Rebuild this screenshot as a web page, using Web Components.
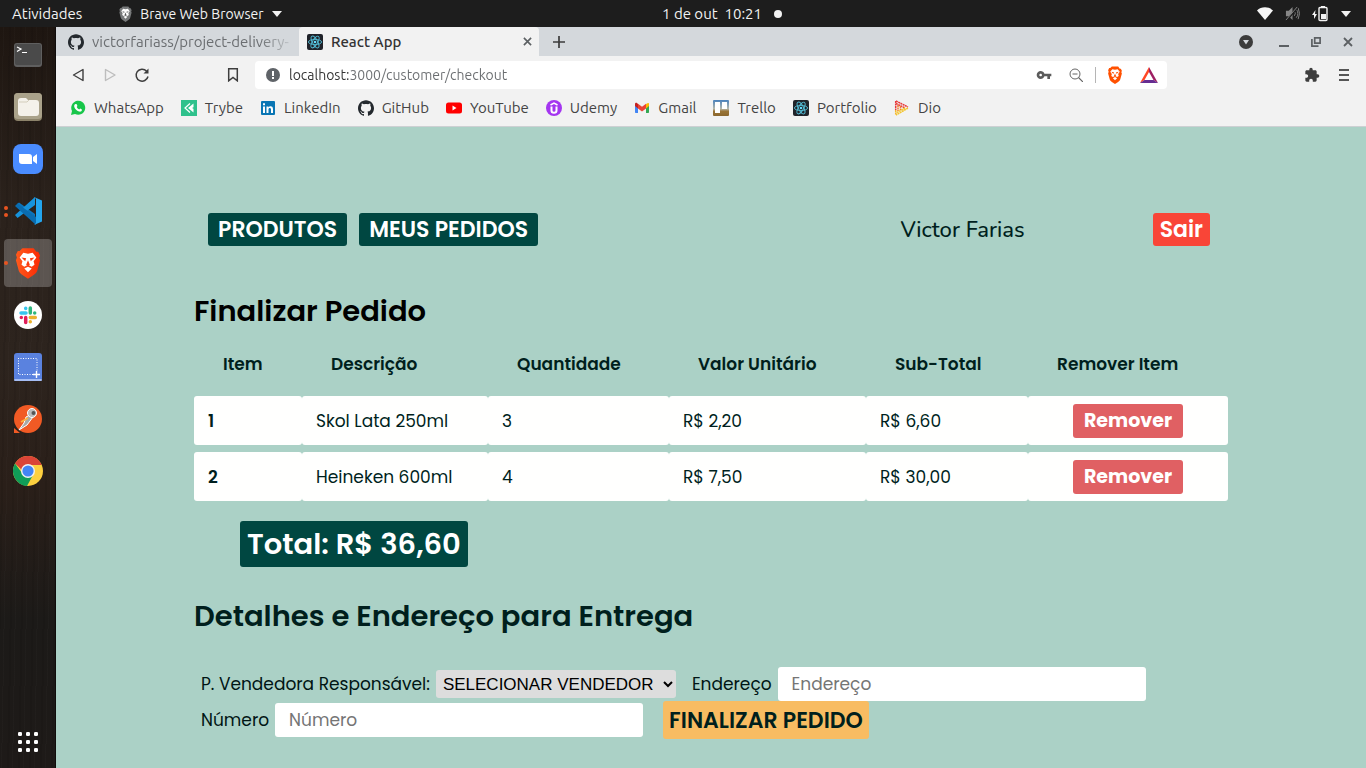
<!DOCTYPE html>
<html lang="pt-BR">
<head>
<meta charset="utf-8">
<meta name="viewport" content="width=device-width, initial-scale=1">
<title>React App</title>
<style>
  body { margin: 0; background: #1d1d1d; }
</style>
</head>
<body>
<desktop-shell></desktop-shell>
<script>
const GITHUB = '<path fill="#24292e" d="M12 .297c-6.63 0-12 5.373-12 12 0 5.303 3.438 9.8 8.205 11.385.6.113.82-.258.82-.577 0-.285-.01-1.04-.015-2.04-3.338.724-4.042-1.61-4.042-1.61C4.422 18.07 3.633 17.7 3.633 17.7c-1.087-.744.084-.729.084-.729 1.205.084 1.838 1.236 1.838 1.236 1.07 1.835 2.809 1.305 3.495.998.108-.776.417-1.305.76-1.605-2.665-.3-5.466-1.332-5.466-5.93 0-1.31.465-2.38 1.235-3.22-.135-.303-.54-1.523.105-3.176 0 0 1.005-.322 3.3 1.23.96-.267 1.98-.399 3-.405 1.02.006 2.04.138 3 .405 2.28-1.552 3.285-1.23 3.285-1.23.645 1.653.24 2.873.12 3.176.765.84 1.23 1.91 1.23 3.22 0 4.61-2.805 5.625-5.475 5.92.42.36.81 1.096.81 2.22 0 1.606-.015 2.896-.015 3.286 0 .315.21.69.825.57C20.565 22.092 24 17.592 24 12.297c0-6.627-5.373-12-12-12"/>';
const REACT = '<rect width="16" height="16" rx="2" fill="#20232a"/><g fill="none" stroke="#53bdd6" stroke-width=".9"><ellipse cx="8" cy="8" rx="6.6" ry="2.6"/><ellipse cx="8" cy="8" rx="6.6" ry="2.6" transform="rotate(60 8 8)"/><ellipse cx="8" cy="8" rx="6.6" ry="2.6" transform="rotate(120 8 8)"/></g><circle cx="8" cy="8" r="1.3" fill="#61dafb"/>';
const lion = (body, face, eyes) => `<path fill="${body}" d="M8 1h12l3 4h2l2 4-1 3 1 2-3 11c-.5 2-2 3.500-4 5l-6 4-6-4c-2-1.500-3.500-3-4-5L1 14l1-3-1-3 2-4h2z"/><path fill="${face}" d="M9 6l5 1 5-1 4 5-3 4 1 4-3 2-4-2-4 2-3-2 1-4-3-4zM10 23l4-2 4 2-4 4z"/><path fill="${eyes}" d="M7 11l5 1-1 3zM21 11l-5 1 1 3zM12 19l2-5 2 5-2 1z"/>`;

const ICONS = {
  github: ['0 0 24 24', GITHUB],
  react: ['0 0 16 16', REACT],
  brave: ['0 0 28 34', '<defs><linearGradient id="b" x2="1"><stop stop-color="#ff5a1c"/><stop offset="1" stop-color="#fb2a05"/></linearGradient></defs>' + lion('url(#b)', '#fff', '#fb3b0e')],
  shield: ['0 0 28 34', lion('#ff5000', '#fff', '#ff5000')],
  bravemono: ['0 0 28 34', lion('#77797a', '#fff', '#555')],
  caret: ['0 0 12 6', '<path fill="#f2f2f2" d="M1 0h10L6 6z"/>'],
  wifi: ['0 0 16 13', '<path fill="#f6f6f6" d="M8 13L0 3.500C4-.7 12-.7 16 3.500z"/>'],
  mute: ['0 0 16 16', '<path fill="#868686" d="M1 5h3l4-4v14l-4-4H1z"/><path fill="none" stroke="#868686" d="M10 5.500q2 2.500 0 5M12 3.500q3.500 4.500 0 9M14 2q3 6 0 12"/><path stroke="#1d1d1d" stroke-width="2" d="M2 15L14 1"/><path stroke="#868686" d="M1 15L13 1"/>'],
  battery: ['0 0 16 16', '<path fill="#f2f2f2" d="M3.500 4L0 9h2v4l3-5H3zM9 0h4v2H9zM9 8h5v5H9z"/><rect x="7" y="1.500" width="8" height="13" rx="1" fill="none" stroke="#f2f2f2" stroke-width="1.400"/>'],
  close: ['0 0 10 10', '<path stroke="currentColor" stroke-width="1.800" d="M1 1l8 8M9 1L1 9"/>'],
  plus: ['0 0 12 12', '<path stroke="#3b3b3b" stroke-width="1.700" d="M6 0v12M0 6h12"/>'],
  tabsearch: ['0 0 14 14', '<circle cx="7" cy="7" r="7" fill="#3c3c3c"/><path fill="#d4d8dc" d="M4 5h6L7 9.500z"/>'],
  minimize: ['0 0 10 10', '<path fill="#5c6063" d="M0 8h10v2H0z"/>'],
  restore: ['0 0 10 10', '<path fill="none" stroke="#5c6063" stroke-width="1.700" d="M3.700.900h5.400v5.200H3.700zM.900 2v7.100H7.500"/>'],
  back: ['0 0 14 14', '<path fill="none" stroke="#3e3e3e" stroke-width="1.400" stroke-linejoin="round" d="M12 1.500v11L2.500 7z"/>'],
  forward: ['0 0 14 14', '<path fill="none" stroke="#bdbdbd" stroke-width="1.400" stroke-linejoin="round" d="M2.500 1.500v11L12 7z"/>'],
  reload: ['0 0 16 16', '<path fill="none" stroke="#3e3e3e" stroke-width="1.500" d="M14 9.500A6 6 0 1 1 12.500 4"/><path fill="#3e3e3e" d="M14.500 1.500v5h-5z"/>'],
  bookmark: ['0 0 14 14', '<path fill="none" stroke="#3e3e3e" stroke-width="1.500" d="M2.700.800h8.600v12L7 9.500l-4.300 3.300z"/>'],
  info: ['0 0 14 14', '<circle cx="7" cy="7" r="7" fill="#5f6368"/><path fill="#fff" d="M6 3h2v5H6zM6 9h2v2H6z"/>'],
  key: ['0 0 24 24', '<path fill="#5b5b5b" d="M12.650 10C11.830 7.670 9.610 6 7 6c-3.310 0-6 2.690-6 6s2.690 6 6 6c2.610 0 4.830-1.670 5.650-4H17v4h4v-4h2v-4H12.650zM7 14c-1.100 0-2-.9-2-2s.9-2 2-2 2 .9 2 2-.9 2-2 2z"/>'],
  zoomout: ['0 0 14 14', '<circle cx="6" cy="6" r="5" fill="none" stroke="#666"/><path stroke="#666" d="M3.500 6h5M9.500 9.500L14 14" stroke-width="1.200"/>'],
  bat: ['0 0 18 16', '<path fill="#ff4724" d="M9 0v5L4.500 13 0 16z"/><path fill="#9e1f63" d="M9 0l9 16-4.500-3L9 5z"/><path fill="#662d91" d="M0 16l4.500-3h9L18 16z"/>'],
  puzzle: ['0 0 24 24', '<path fill="#3e3e3e" d="M20.500 11H19V7c0-1.100-.9-2-2-2h-4V3.500a2.500 2.500 0 0 0-5 0V5H4c-1.100 0-1.990.9-1.990 2v3.800H3.500c1.490 0 2.700 1.210 2.700 2.700s-1.210 2.700-2.700 2.700H2V20c0 1.100.9 2 2 2h3.800v-1.500c0-1.490 1.210-2.700 2.700-2.700s2.700 1.210 2.700 2.700V22H17c1.100 0 2-.9 2-2v-4h1.500a2.500 2.500 0 0 0 0-5z"/>'],
  menu: ['0 0 12 12', '<path fill="#555" d="M1 0h10v2H1zM1 5h10v2H1zM1 10h10v2H1z"/>'],
  whatsapp: ['0 0 16 16', '<path fill="#18c64a" d="M1 15l1-4A7 7 0 1 1 5 14z"/><path fill="#fff" d="M5.500 4l1.300.2.600 1.800-.7.900c.6 1.200 1.300 1.900 2.600 2.500l.9-.9 1.700.9c.2 1.800-1.300 2.400-2.500 2.200C6.500 10.800 4 8 4.200 6c0-.9.500-1.700 1.300-2z"/>'],
  trybe: ['0 0 16 16', '<path fill="#2fc18c" d="M0 0h16v16H0z"/><path fill="none" stroke="#fff" stroke-width="1.200" d="M9 3.500L4 8l5 4.500"/><path fill="#fff" d="M12.500 3.500v3.700l-1.500.8 1.500.8v3.700L7 8z"/>'],
  linkedin: ['0 0 16 16', '<rect x="1" y="1" width="14" height="14" rx="1" fill="#0a76b4"/><path fill="#fff" d="M3 6.500h2V13H3zM3 3.300h2v2H3zM6.500 6.500h2v1c1-1.700 4.500-1.700 4.500 1.500v4h-2V9.500c0-2-2.500-2-2.500 0V13h-2z"/>'],
  youtube: ['0 0 16 16', '<rect y="2.500" width="16" height="11" rx="2.500" fill="#f00"/><path fill="#fff" d="M6.500 5.500l4 2.500-4 2.500z"/>'],
  udemy: ['0 0 16 16', '<circle cx="8" cy="8" r="8" fill="#a435f0"/><path fill="none" stroke="#fff" stroke-width="2" d="M5.500 6.500v4c0 3 5 3 5 0v-4"/><path fill="none" stroke="#fff" stroke-width="1.500" d="M4.500 5L8 3l3.500 2"/>'],
  gmail: ['0 0 16 16', '<path fill="#4285f4" d="M1 4l3 2v7H2c-.6 0-1-.4-1-1z"/><path fill="#34a853" d="M15 4l-3 2v7h2c.6 0 1-.4 1-1z"/><path fill="#fbbc04" d="M12 4l2-1c.6 0 1 .4 1 1v2l-3 2.500z"/><path fill="#c5221f" d="M1 4c0-1 1-1.500 2-1l1 1v4.500L1 6z"/><path fill="#ea4335" d="M4 3.800l4 3 4-3v4.700l-4 3-4-3z"/>'],
  trello: ['0 0 16 16', '<defs><linearGradient id="t" x2="0" y2="1"><stop stop-color="#4a82bd"/><stop offset=".55" stop-color="#b6b9ad"/><stop offset=".7" stop-color="#9a7537"/><stop offset="1" stop-color="#8b672e"/></linearGradient></defs><rect width="16" height="16" rx="1" fill="url(#t)"/><path fill="#fff" d="M2 2h5v11H2zM9 2h5v7H9z"/>'],
  dio: ['0 0 16 16', '<g fill="none" stroke-width="1.500" stroke-dasharray="2 .5"><path stroke="#e83b3d" d="M2 1l12 6M2 3.500l9 4.500"/><path stroke="#e83b3d" d="M1.700 1v9"/><path stroke="#f27a2d" d="M4 5v6M6.500 6v4"/><path stroke="#f3c530" d="M14 8L2 15M11 8l-9 5"/><path stroke="#f5b92c" d="M1.700 10v5"/></g>'],
  terminal: ['0 0 28 24', '<rect width="28" height="24" rx="3" fill="#5f5f5f"/><rect x="1" y="1" width="26" height="21" rx="2" fill="#4a4a4a"/><path fill="none" stroke="#fff" stroke-width="1.200" d="M3 4l4 2-4 2.500M8 9.500h5"/>'],
  files: ['0 0 30 30', '<rect x="1" y="1" width="28" height="28" rx="4" fill="#8c836a"/><rect x="1" y="1" width="28" height="26" rx="4" fill="#aaa28a"/><path fill="#f4f1ea" d="M5 9q0-3 3-3h5l2 2h8q3 0 3 3v10q0 3-3 3H8q-3 0-3-3z"/><path stroke="#d3cdbb" d="M6 10h8l2-2" fill="none"/>'],
  zoomapp: ['0 0 30 30', '<rect width="30" height="30" rx="8" fill="#4a8cff"/><path fill="#fff" d="M6 10h10q3 0 3 3v7H9q-3 0-3-3zM20 13l4-3v10l-4-3z"/>'],
  vscode: ['0 0 28 28', '<path fill="#0b75bd" d="M3 7l18 17v-7L5 5.500z" /><path fill="#1793dc" d="M1 18l2.500 3L21 8V0z"/><path fill="#0a6cb0" d="M1 9l2.500-2.500L22 20v8z"/><path fill="#23a5ee" d="M20 0l8 3.500v21L20 28l2-2V2z"/>'],
  slack: ['0 0 28 28', '<circle cx="14" cy="14" r="14" fill="#fff"/><g stroke-width="3.500" stroke-linecap="round"><path stroke="#36c5f0" d="M7 12h5M11.700 7.300v.1"/><path stroke="#2eb67d" d="M16.300 7v5M20.700 12v0"/><path stroke="#ecb22e" d="M16.300 16.500h5M16.300 20.800v0"/><path stroke="#e01e5a" d="M11.700 16.500v5M7.300 16.500v0"/></g>'],
  screenshot: ['0 0 28 28', '<rect width="28" height="28" rx="3" fill="#5a82df"/><rect y="26" width="28" height="2" rx="1" fill="#a5bdf4"/><path fill="none" stroke="#fff" stroke-dasharray="1 1.500" d="M4 5.500h19v13M4.500 5v16.500h15"/><path stroke="#fff" stroke-width="1.400" d="M22.500 18v7M19 21.500h7"/>'],
  postman: ['0 0 30 30', '<circle cx="15" cy="15" r="14" fill="#f15a24"/><path fill="#f15a24" d="M1 24l6 5H1z"/><path fill="#a5a9a8" stroke="#fff" d="M17 11l3 2-6 8-8 5 5-7 2-6z"/><circle cx="19" cy="9" r="4.500" fill="#bbb" stroke="#fff"/><circle cx="20.500" cy="9" r="2" fill="#555"/><path stroke="#ffb13c" stroke-width="2" d="M8 18l7-4"/>'],
  chrome: ['0 0 30 30', '<circle cx="15" cy="15" r="15" fill="#fdd03f"/><path fill="#da4437" d="M2 7.500A15 15 0 0 1 28 7.500L28.500 9H15a6 6 0 0 0-6 5z"/><path fill="#109d58" d="M2 7.500A15 15 0 0 0 14 30l6-11-5 2a7 7 0 0 1-6-4z"/><circle cx="15" cy="15" r="7" fill="#f1f1f1"/><circle cx="15" cy="15" r="5.600" fill="#4285f4"/>'],
  apps: ['0 0 20 20', [0, 8, 16].map(y => [0, 8, 16].map(x => `<rect x="${x}" y="${y}" width="4" height="4" rx="1.300" fill="#fff"/>`).join('')).join('')]
};

/* Shared base: fills the open shadow root from styles() and markup(). */
class UiElement extends HTMLElement {
  constructor() {
    super();
    this.attachShadow({ mode: 'open' });
  }
  connectedCallback() {
    const t = document.createElement('template');
    t.innerHTML = `<style>*{box-sizing:border-box}${this.styles()}</style>${this.markup()}`;
    this.shadowRoot.replaceChildren(t.content.cloneNode(true));
  }
  styles() { return ''; }
  markup() { return '<slot></slot>'; }
}

const define = (name, styles, markup) => customElements.define(name, class extends UiElement {
  styles() { return typeof styles === 'function' ? styles(this) : styles; }
  markup() { return typeof markup === 'function' ? markup(this) : markup; }
});

define('ui-icon',
  el => `:host{display:block;flex:none;width:${el.getAttribute('w')}px;height:${el.getAttribute('h') || el.getAttribute('w')}px}svg{display:block;width:100%;height:100%}`,
  el => { const [box, body] = ICONS[el.getAttribute('name')]; return `<svg viewBox="${box}" aria-hidden="true">${body}</svg>`; });

define('icon-button', `
  :host{display:block;flex:none}
  button{display:grid;place-items:center;width:32px;height:28px;padding:0;border:0;background:none;color:#5c6063}`,
  el => `<button type="button" aria-label="${el.getAttribute('label')}"><slot></slot></button>`);

define('top-bar', `
  :host{display:grid;grid-template-columns:1fr auto 1fr;align-items:center;height:27px;background:#1d1d1d;color:#f2f2f2;font-size:15px}
  .left,.mid,.right{display:flex;align-items:center}
  .left{padding-left:12px;gap:36px}
  .mid{padding-left:78px;gap:12px}
  .right{justify-content:flex-end;gap:12px;padding-right:14px}
  button{display:flex;align-items:center;gap:7px;padding:0;border:0;background:none;color:inherit;font:inherit;white-space:pre}
  .app{font-size:14px}
  .dot{width:8px;height:8px;border-radius:50%;background:#f2f2f2}`,
  `<div class="left"><button type="button">Atividades</button>
    <button type="button" class="app"><ui-icon name="bravemono" w="15" h="16"></ui-icon>Brave Web Browser<ui-icon name="caret" w="12" h="6"></ui-icon></button></div>
   <div class="mid"><button type="button">1 de out  10:21</button><span class="dot"></span></div>
   <div class="right"><ui-icon name="wifi" w="16" h="13"></ui-icon><ui-icon name="mute" w="15"></ui-icon><ui-icon name="battery" w="16"></ui-icon><ui-icon name="caret" w="12" h="6"></ui-icon></div>`);

define('dock-item', `
  :host{display:block}
  button{position:relative;display:grid;place-items:center;width:48px;height:48px;padding:0;border:0;border-radius:4px;background:none}
  :host([active]) button{background:#ffffff3b}
  .dots{position:absolute;left:0;display:grid;gap:3px}
  i{width:4px;height:4px;border-radius:50%;background:#e95420}`,
  el => `<button type="button" aria-label="${el.getAttribute('label')}"><span class="dots">${'<i></i>'.repeat(+el.getAttribute('windows') || 0)}</span><slot></slot></button>`);

define('app-dock', `
  :host{display:flex;flex-direction:column;gap:4px;padding:4px 4px 2px;border-right:1px solid #0f0c0b;
    background:repeating-linear-gradient(91deg,#0000 0 3px,#ffffff04 3px 4px,#0000 4px 9px,#00000014 9px 11px),
      linear-gradient(#1e1611 0,#2b221c 25%,#2d241e 45%,#2a1f19 62%,#1c1a18 80%,#1e1a18 100%)}
  .end{margin-top:auto}`, `
  <dock-item label="Terminal"><ui-icon name="terminal" w="28" h="24"></ui-icon></dock-item>
  <dock-item label="Arquivos"><ui-icon name="files" w="30"></ui-icon></dock-item>
  <dock-item label="Zoom"><ui-icon name="zoomapp" w="30"></ui-icon></dock-item>
  <dock-item label="Visual Studio Code" windows="2"><ui-icon name="vscode" w="28"></ui-icon></dock-item>
  <dock-item label="Brave" windows="1" active><ui-icon name="brave" w="26" h="32"></ui-icon></dock-item>
  <dock-item label="Slack"><ui-icon name="slack" w="28"></ui-icon></dock-item>
  <dock-item label="Captura de tela"><ui-icon name="screenshot" w="28"></ui-icon></dock-item>
  <dock-item label="Postman"><ui-icon name="postman" w="30"></ui-icon></dock-item>
  <dock-item label="Google Chrome"><ui-icon name="chrome" w="30"></ui-icon></dock-item>
  <dock-item class="end" label="Mostrar aplicativos"><ui-icon name="apps" w="20"></ui-icon></dock-item>`);

define('tab-strip', `
  :host{display:flex;align-items:stretch;height:29px;background:#d4d8dc;font-size:15px}
  .tab{display:flex;align-items:center;gap:8px;border:0;font:inherit;text-align:left;white-space:nowrap;background:none;color:#6b6e71}
  .first{flex:0 0 243px;padding:0 0 0 12px}
  .first span{-webkit-mask:linear-gradient(90deg,#000 85%,#0003);mask:linear-gradient(90deg,#000 85%,#0003)}
  .current{flex:0 0 240px;padding:0 0 0 8px;border-radius:4px 4px 0 0;background:#f2f2f2;color:#333}
  .current button{border:0;padding:0;background:none;font:inherit;font-weight:500;color:inherit;flex:1;text-align:left}
  .window{display:flex;margin-left:auto;padding-right:2px}
  .window > :first-child{margin-right:6px}
  .current icon-button{margin-right:-4px}
  .current+icon-button{margin-left:4px}
  icon-button{align-self:center}`, `
  <button type="button" class="tab first"><ui-icon name="github" w="16"></ui-icon><span>victorfariass/project-delivery-</span></button>
  <div class="tab current"><ui-icon name="react" w="16"></ui-icon><button type="button">React App</button><icon-button label="Fechar aba"><ui-icon name="close" w="9"></ui-icon></icon-button></div>
  <icon-button label="Nova aba"><ui-icon name="plus" w="12"></ui-icon></icon-button>
  <div class="window">
    <icon-button label="Pesquisar abas"><ui-icon name="tabsearch" w="14"></ui-icon></icon-button>
    <icon-button label="Minimizar"><ui-icon name="minimize" w="10"></ui-icon></icon-button>
    <icon-button label="Restaurar"><ui-icon name="restore" w="10"></ui-icon></icon-button>
    <icon-button label="Fechar"><ui-icon name="close" w="10"></ui-icon></icon-button>
  </div>`);

define('address-bar', `
  :host{display:flex;align-items:center;height:38px;padding:0 6px;background:#f2f2f2}
  .nav{display:flex;flex:0 0 193px}
  .nav > :last-child{margin-left:auto;margin-right:6px}
  .box{display:flex;align-items:center;flex:1;min-width:0;height:28px;padding:0 2px 0 11px;border-radius:4px;background:#fff}
  .box > :last-child{margin-left:2px}
  input{flex:1;min-width:0;padding:0;margin-left:9px;border:0;outline:0;font:inherit;font-size:14px;
    background:linear-gradient(90deg,#333 60px,#6a6d70 60px);-webkit-background-clip:text;background-clip:text;color:transparent}
  .rule{width:1px;height:16px;margin:0 3px;background:#b5b5b5}
  .ext{display:flex;justify-content:flex-end;flex:0 0 193px}`, `
  <div class="nav"><icon-button label="Voltar"><ui-icon name="back" w="14"></ui-icon></icon-button><icon-button label="Avançar"><ui-icon name="forward" w="14"></ui-icon></icon-button><icon-button label="Recarregar"><ui-icon name="reload" w="16"></ui-icon></icon-button><icon-button label="Adicionar favorito"><ui-icon name="bookmark" w="14"></ui-icon></icon-button></div>
  <div class="box"><ui-icon name="info" w="14"></ui-icon><input type="text" aria-label="Endereço" value="localhost:3000/customer/checkout"><icon-button label="Senhas"><ui-icon name="key" w="16"></ui-icon></icon-button><icon-button label="Zoom"><ui-icon name="zoomout" w="14"></ui-icon></icon-button><span class="rule"></span><icon-button label="Brave Shields"><ui-icon name="shield" w="16" h="18"></ui-icon></icon-button><icon-button label="Brave Rewards"><ui-icon name="bat" w="18" h="16"></ui-icon></icon-button></div>
  <div class="ext"><icon-button label="Extensões"><ui-icon name="puzzle" w="16"></ui-icon></icon-button><icon-button label="Menu"><ui-icon name="menu" w="12"></ui-icon></icon-button></div>`);

define('bookmark-link', `
  :host{display:block}
  a{display:flex;align-items:center;gap:8px;color:#444;text-decoration:none;white-space:nowrap;line-height:16px}`,
  el => `<a href="#"><ui-icon name="${el.getAttribute('icon')}" w="16"></ui-icon><slot></slot></a>`);

define('bookmarks-bar', `
  :host{display:flex;align-items:center;gap:17px;height:33px;padding:0 14px 4px;border-bottom:1px solid #cdd0d3;background:#f2f2f2;font-size:15px}`, `
  <bookmark-link icon="whatsapp">WhatsApp</bookmark-link><bookmark-link icon="trybe">Trybe</bookmark-link><bookmark-link icon="linkedin">LinkedIn</bookmark-link><bookmark-link icon="github">GitHub</bookmark-link><bookmark-link icon="youtube">YouTube</bookmark-link><bookmark-link icon="udemy">Udemy</bookmark-link><bookmark-link icon="gmail">Gmail</bookmark-link><bookmark-link icon="trello">Trello</bookmark-link><bookmark-link icon="react">Portfolio</bookmark-link><bookmark-link icon="dio">Dio</bookmark-link>`);

define('app-button', `
  :host{display:block}
  button{display:block;min-width:100%;height:33px;padding:1px 10px 0;border:0;border-radius:3px;background:#004741;color:#fff;font:600 22px/32px Poppins,Inter,sans-serif;white-space:nowrap}
  :host([kind=exit]) button{padding:1px 7px 0;background:#f94537}
  :host([kind=remove]) button{height:34px;background:#e06063;font-size:19px;font-weight:700}
  :host([kind=submit]) button{height:38px;padding:1px 6px 0;background:#f8bc62;color:#001f1d}`,
  el => `<button type="${el.getAttribute('kind') === 'submit' ? 'submit' : 'button'}"><slot></slot></button>`);

define('site-nav', `
  :host{display:flex;align-items:center;gap:12px;padding:0 18px 0 14px}
  .user{margin-left:auto;margin-right:116px;padding-top:1px;font:500 22px/32px Nunito,"Open Sans",sans-serif;color:#001f1d}`, `
  <app-button>PRODUTOS</app-button><app-button>MEUS PEDIDOS</app-button><span class="user">Victor Farias</span><app-button kind="exit">Sair</app-button>`);

const ORDER = [[1, 'Skol Lata 250ml', 3, '2,20', '6,60'], [2, 'Heineken 600ml', 4, '7,50', '30,00']];
define('order-table', `
  :host{display:block}
  table{width:100%;table-layout:fixed;border-collapse:separate;border-spacing:0 7px;font-size:17px;color:#001f1d}
  thead th{height:50px;padding:0 0 0 29px;font-weight:600;text-align:left;white-space:nowrap}
  tbody th,td{height:49px;padding:0 14px;border-radius:3px;background:#fffffe;text-align:left}
  tbody th{font-weight:600}
  app-button{width:110px;margin:0 auto}`, `
  <table><colgroup>${[108, 186, 181, 197, 162, 200].map(w => `<col style="width:${w}px">`).join('')}</colgroup>
  <thead><tr>${['Item', 'Descrição', 'Quantidade', 'Valor Unitário', 'Sub-Total', 'Remover Item'].map(h => `<th scope="col">${h}</th>`).join('')}</tr></thead>
  <tbody>${ORDER.map(([n, d, q, u, s]) => `<tr><th scope="row">${n}</th><td>${d}</td><td>${q}</td><td>R$ ${u}</td><td>R$ ${s}</td><td><app-button kind="remove">Remover</app-button></td></tr>`).join('')}</tbody></table>`);

define('delivery-form', `
  :host{display:block}
  form{padding-left:7px;font-size:17px;color:#001514}
  .row{display:flex;align-items:center;min-height:34px}
  .row+.row{min-height:38px}
  label{margin-right:6px;white-space:nowrap}
  input,select{flex:none;border:0;border-radius:3px;font:inherit;color:#001514}
  input{width:368px;height:34px;padding:0 14px;background:#fff}
  input::placeholder{color:#757575}
  select{width:240px;height:28px;margin-right:16px;padding:0 3px;background:#ddd;color:#000;font-family:"Liberation Sans",sans-serif}
  app-button{margin-left:20px}`, `
  <form><div class="row"><label for="seller">P. Vendedora Responsável:</label><select id="seller"><option>SELECIONAR VENDEDOR</option></select><label for="address">Endereço</label><input id="address" type="text" placeholder="Endereço"></div>
  <div class="row"><label for="number">Número</label><input id="number" type="text" placeholder="Número"><app-button kind="submit">FINALIZAR PEDIDO</app-button></div></form>`);

define('checkout-page', `
  :host{display:block;padding:86px 138px 28px;background:#abd1c6;font-family:Poppins,Inter,sans-serif}
  h1,h2,.total{font-size:29px;line-height:42px;font-weight:600}
  h1{margin:44px 0 0;color:#000}
  h2{margin:28px 0 30px;color:#001f1d}
  .total{width:max-content;margin:13px 0 0 46px;padding:2px 7px;border-radius:3px;background:#004741;color:#fff}`, `
  <site-nav></site-nav><h1>Finalizar Pedido</h1><order-table></order-table><p class="total">Total: R$ 36,60</p><h2>Detalhes e Endereço para Entrega</h2><delivery-form></delivery-form>`);

define('desktop-shell', `
  :host{display:grid;grid-template:"bar bar" auto "dock win" 1fr / 56px 1fr;min-height:100vh;font-family:Ubuntu,"Noto Sans",sans-serif}
  top-bar{grid-area:bar}
  app-dock{grid-area:dock}
  main{grid-area:win;display:flex;flex-direction:column;min-width:0}
  checkout-page{flex:1}`, `
  <top-bar></top-bar><app-dock></app-dock><main><tab-strip></tab-strip><address-bar></address-bar><bookmarks-bar></bookmarks-bar><checkout-page></checkout-page></main>`);
</script>
</body>
</html>
